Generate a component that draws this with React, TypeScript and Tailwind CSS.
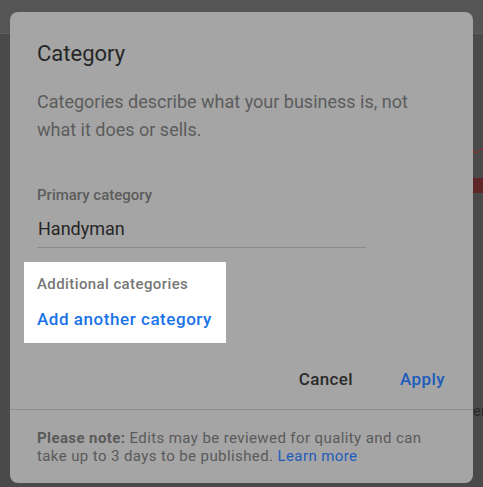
export default function App() {
  return (
    <div
      className="relative w-[483px] h-[487px] overflow-hidden bg-[#4a4a4a]"
      style={{ fontFamily: 'Roboto, "Noto Sans", sans-serif' }}
    >
      {/* page behind the modal */}
      <div className="absolute left-0 top-0 w-full h-[34px] bg-[#555555] border-b border-[#5e5e5e]" />
      <svg className="absolute left-[473px] top-[146px]" width="10" height="10" viewBox="0 0 10 10">
        <path d="M0 4 Q3 9 6 5 T10 4" stroke="#8a2a2a" strokeWidth="1.2" fill="none" />
      </svg>
      <div className="absolute left-[473px] top-[178px] w-[10px] h-[15px] bg-[#5e2626]" />
      <div className="absolute left-[473px] top-[402px] w-[10px] overflow-hidden text-[15px] text-[#2a2a2a] leading-[18px]">en</div>

      <div className="relative pt-[12px] pl-[10px]">
        <div className="w-[463px] h-[471px] rounded-[8px] bg-[#a5a5a5] flex flex-col">
          <div className="px-[27px] pt-[27px]">
            <h2 className="text-[22px] leading-[30px] text-[#262626]">Category</h2>
            <p className="mt-[19px] text-[18px] leading-[28px] text-[#5c5c5c] pr-[20px]">
              Categories describe what your business is, not what it does or sells.
            </p>
            <div className="mt-[41px] text-[15px] leading-[20px] font-medium text-[#5c5c5c]">
              Primary category
            </div>
            <div className="mt-[12px] w-[329px] border-b border-[#8a8a8a] pb-[6px] pl-[1px] text-[18px] leading-[24px] text-[#262626]">
              Handyman
            </div>
            <div className="mt-[14px] -ml-[13px] w-[202px] bg-white px-[13px] pt-[12px] pb-[12px]">
              <div className="text-[15px] leading-[20px] font-medium tracking-[0.4px] text-[#777777]">
                Additional categories
              </div>
              <div className="mt-[13px] text-[17px] leading-[24px] font-medium tracking-[0.55px] text-[#1a73e8]">
                Add another category
              </div>
            </div>
          </div>
          <div className="mt-[26px] flex justify-end items-center gap-[47px] pr-[28px]">
            <button className="text-[17px] leading-[20px] font-medium tracking-[0.4px] text-[#2a2a2a]">Cancel</button>
            <button className="text-[17px] leading-[20px] font-medium tracking-[0.4px] text-[#1d5cbc]">Apply</button>
          </div>
          <div className="mt-[20px] border-t border-[#8f8f8f] px-[27px] pt-[19px]">
            <p className="text-[15px] leading-[18px] tracking-[0.4px] text-[#5a5a5a]">
              <span className="font-bold">Please note:</span> Edits may be reviewed for quality and can take up to 3 days to be published.{' '}
              <span className="text-[#1d5cbc]">Learn more</span>
            </p>
          </div>
        </div>
      </div>
    </div>
  );
}
